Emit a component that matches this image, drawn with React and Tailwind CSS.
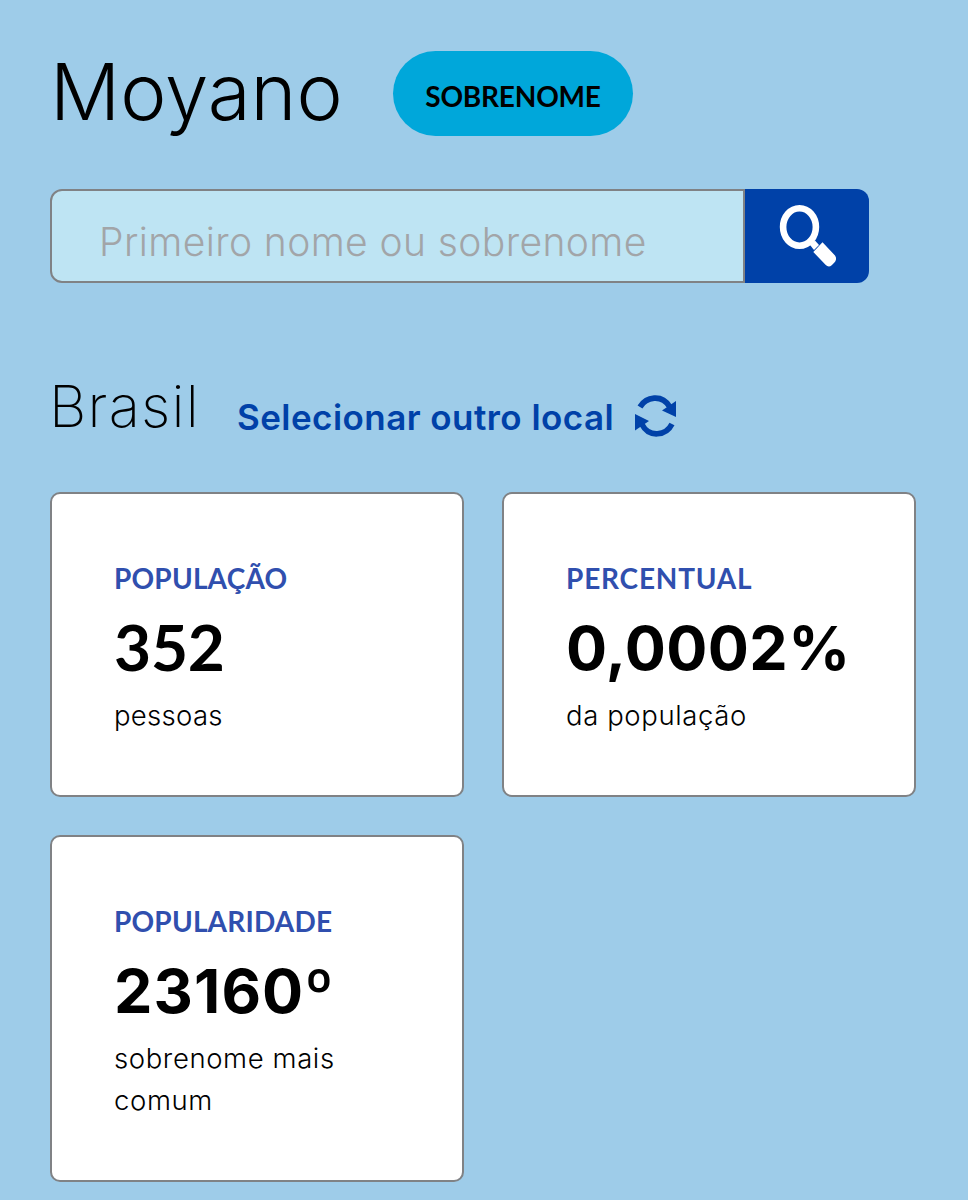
import React from "react";

const stats = [
  { label: "POPULAÇÃO", value: "352", note: "pessoas", labelClass: "tracking-[0.2px]", valueClass: "pt-px text-[64px] leading-[93px] tracking-[-0.2px]", noteClass: "tracking-[0.3px]" },
  { label: "PERCENTUAL", value: "0,0002%", note: "da população", labelClass: "tracking-[0.8px]", valueClass: "pt-[4px] font-['Inter',sans-serif] text-[61px] leading-[90px] tracking-[0.4px]", noteClass: "tracking-[0.6px]" },
  { label: "POPULARIDADE", value: "23160º", note: "sobrenome mais comum", labelClass: "tracking-[0.2px]", valueClass: "pt-[4px] font-['Inter',sans-serif] text-[61px] leading-[90px] tracking-[1.1px]", noteClass: "tracking-[0.6px]" },
];

function StatCard({ label, value, note, labelClass, valueClass, noteClass }) {
  return (
    <section className="w-[414px] rounded-[10px] border-2 border-[#808285] bg-white pt-[63px] pr-[62px] pb-[60px] pl-[62px]">
      <h3 className={`text-[28px] leading-[42px] font-bold whitespace-nowrap text-[#304fae] ${labelClass}`}>{label}</h3>
      <p className={`font-bold whitespace-nowrap ${valueClass}`}>{value}</p>
      <p className={`-mb-px w-[240px] pt-px font-['Inter',sans-serif] text-[27.5px] leading-[42px] font-light ${noteClass}`}>{note}</p>
    </section>
  );
}

function SearchIcon() {
  return (
    <svg className="h-[64px] w-[58px]" viewBox="0 0 58 64" aria-hidden="true">
      <ellipse cx="21.500" cy="23" rx="16.400" ry="18.800" fill="none" stroke="#fff" strokeWidth="6.600" />
      <path d="M32 41l5-4.500 4 4.500-5 5z" fill="#fff" />
      <path d="M44.500 38.200L57 51.500q2.500 3.700-.8 7.300l-2.500 2.500q-3.200 2.700-6.200-.6L35.300 48z" fill="#fff" />
    </svg>
  );
}

function RefreshIcon() {
  return (
    <svg className="h-[42px] w-[42px]" viewBox="0 0 42 42" aria-hidden="true">
      <g fill="none" stroke="#0041a8" strokeWidth="5.600">
        <path d="M5 12C11 1.500 27 -1 34.500 11.500" />
        <path d="M37 29C31 41 14 43 7 29.500" />
      </g>
      <path d="M41 6v16L27 15.500z" fill="#0041a8" />
      <path d="M0 19v16.500L14 26z" fill="#0041a8" />
    </svg>
  );
}

export default function App() {
  return (
    <main className="h-[1200px] w-[968px] overflow-hidden bg-[#9ecce9] pt-[51px] pl-[50px] font-['Lato',sans-serif] text-black">
      <header className="flex h-[85px] items-start">
        <h1 className="w-[343px] font-['Inter',sans-serif] text-[78px] leading-[82px] font-light">Moyano</h1>
        <span className="flex h-[85px] w-[240px] items-center justify-center rounded-full bg-[#00a7da] pt-[5px] text-[28px] leading-[42px] font-bold tracking-[-0.2px]">SOBRENOME</span>
      </header>

      <form className="mt-[53px] flex h-[94px] w-[820px]">
        <input
          className="h-[94px] w-[695px] rounded-l-[12px] border-2 border-[#808285] bg-[#bee4f3] pt-[10px] pl-[47px] font-['Inter',sans-serif] text-[39px] font-light tracking-[0.4px] outline-none placeholder:text-[#a2a5a8]"
          placeholder="Primeiro nome ou sobrenome"
        />
        <button type="button" aria-label="Buscar" className="flex h-[94px] w-[124px] items-center justify-center rounded-r-[12px] bg-[#0041a8]">
          <SearchIcon />
        </button>
      </form>

      <div className="mt-[93px] flex h-[70px] items-start">
        <h2 className="-ml-px w-[188px] font-['Inter',sans-serif] text-[58px] leading-[60px] font-extralight tracking-[1.2px]">Brasil</h2>
        <a className="flex items-start text-[#0041a8]">
          <span className="w-[398px] pt-[20px] font-['Inter',sans-serif] text-[35px] leading-[42px] font-semibold tracking-[0.45px] whitespace-nowrap">Selecionar outro local</span>
          <span className="pt-[19px]"><RefreshIcon /></span>
        </a>
      </div>

      <div className="mt-[46px] flex w-[866px] flex-wrap items-start gap-[38px]">
        {stats.map((s) => <StatCard key={s.label} {...s} />)}
      </div>
    </main>
  );
}
